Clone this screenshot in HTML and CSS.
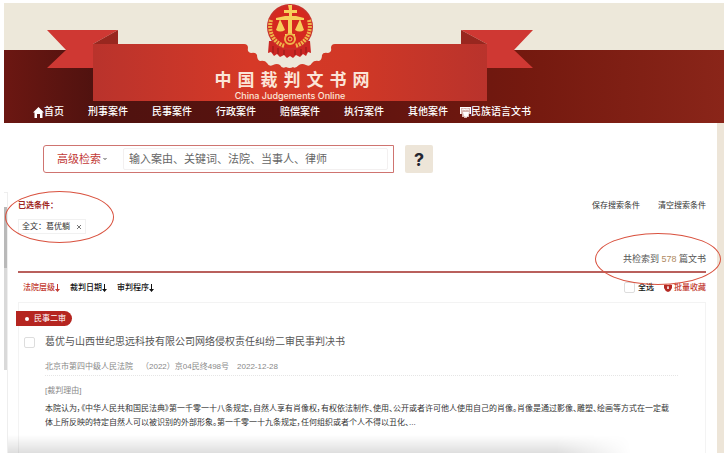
FILE: index.html
```html
<!DOCTYPE html>
<html lang="zh-CN">
<head>
<meta charset="UTF-8" />
<meta name="viewport" content="width=device-width, initial-scale=1" />
<title>中国裁判文书网</title>
<link rel="stylesheet" href="styles.css">
</head>
<body>
  <header class="header">
    <div class="brand">
      <svg class="ribbon" viewBox="47 3 486 98" aria-hidden="true">
        <defs>
          <linearGradient id="band" x1="0" x2="1">
            <stop offset="0" stop-color="#b9332c" />
            <stop offset=".4" stop-color="#d63927" />
            <stop offset=".65" stop-color="#d13826" />
            <stop offset="1" stop-color="#b9332c" />
          </linearGradient>
        </defs>
        <!-- tails and folds -->
        <path fill="#cf3833" d="M47 30h71L93 44v24H47l19-18z" />
        <path fill="#cf3833" d="M533 30h-72l26 14v24h46l-19-18z" />
        <path fill="#98271f" d="M118 30v14H93zM461 30v14h26z" />
        <!-- main band with the scalloped cut -->
        <path fill="#ede8da" d="M240 44h100v26H240z" />
        <path fill="url(#band)" d="M93 44H244q4 0 4 4q-1 4 3 5q5-1 6 2q0 5 3 6q5-1 7 2q2 4 6 2q4-2 7 0q2 4 6 2q4 2 7 0q2 2 6-2q3-2 7 0q4 2 6-2q2-3 7-2q3-1 3-6q1-3 6-2q4-1 3-5q0-4 4-4H487v57H93z" />
        <!-- emblem -->
        <path fill="#cb2623" d="M269 41l-1 12 3-1 3 4 3-2 3 3 4-2 3 3 3-2 3 2 3-3 4 2 3-3 3 2 2-4 3 1-1-12z" />
        <path stroke="#8f1a18" fill="none" d="M273 46v7m5-5v6m6-4v5m11-5v5m6-6v6m5-8v6" />
        <circle cx="290" cy="27" r="23" fill="#c9302a" />
        <circle cx="290" cy="27" r="21" fill="#d5281f" />
        <path fill="none" stroke="#efb54a" stroke-width="4" stroke-dasharray="2 1" d="M271 20C268 31 273 43 285 46M309 20C312 31 307 43 295 46" />
        <path fill="#f7cf5b" d="M288 5h4v5h5v3h-5v3h4l8 2v2h-12v14h3v2h-10v-2h3V20h-12v-2l9-2h4v-3h-5v-3h5z" />
        <path fill="#f7cf5b" d="M280 19l5 11q-5 3-9 0zM300 19l4 11q-4 3-9 0z" />
        <circle cx="290" cy="39" r="5" fill="#d5281f" stroke="#efb54a" stroke-width="2" />
        <circle cx="290" cy="39" r="2" fill="none" stroke="#f7cf5b" />
      </svg>
      <div class="brand-text">
        <h1>中国裁判文书网</h1>
        <p>China Judgements Online</p>
      </div>
    </div>
    <nav class="nav">
      <a href="#"><svg class="icon-home" viewBox="0 0 11 11" aria-hidden="true"><path fill="#fff" d="M5.500 0L11 5.500H9.500V11H7V7H4v4H1.500V5.500H0z" /></svg>首页</a>
      <a href="#">刑事案件</a>
      <a href="#">民事案件</a>
      <a href="#">行政案件</a>
      <a href="#">赔偿案件</a>
      <a href="#">执行案件</a>
      <a href="#">其他案件</a>
      <a href="#" class="nav-ethnic"><svg class="icon-home" viewBox="0 0 11 11" aria-hidden="true"><path fill="#d9b8b2" d="M0 0h11v7H9v3H7v1H4v-1H2V7H0z" /><path stroke="#fff" fill="none" d="M0 .5h11M.5 0v7M10.500 0v7M2 3l2-1 1 1 2-1 2 1" /><path fill="#fff" d="M3 5h6L8 9l-2 1-2-1z" /></svg>民族语言文书</a>
    </nav>
  </header>

  <main class="main">
    <form class="search">
      <div class="search-box">
        <select class="search-type" aria-label="检索类型">
          <option>高级检索</option>
        </select>
        <input class="search-input" type="text" placeholder="输入案由、关键词、法院、当事人、律师" aria-label="检索关键词" />
      </div>
      <button class="help" type="button">?</button>
    </form>

    <div class="results">
      <div class="side"></div>
      <section class="content">
        <div class="conditions">
          <div class="picked">
            <h2>已选条件：</h2>
            <div class="tag">全文：葛优躺<button type="button" aria-label="删除条件"><svg viewBox="0 0 6 6" aria-hidden="true"><path stroke="#777" d="M1 1l4 4M5 1L1 5" /></svg></button></div>
            <span class="mark mark-left"></span>
          </div>
          <div class="actions">
            <a href="#">保存搜索条件</a>
            <a href="#">清空搜索条件</a>
          </div>
        </div>

        <div class="count">
          <p>共检索到 <b>578</b> 篇文书</p>
          <span class="mark mark-right"></span>
        </div>

        <div class="toolbar">
          <div class="sort">
            <a href="#" class="active">法院层级<svg viewBox="0 0 5 8" aria-hidden="true"><path d="M2 0h1v5h2L2.500 8 0 5h2z" /></svg></a>
            <a href="#">裁判日期<svg viewBox="0 0 5 8" aria-hidden="true"><path d="M2 0h1v5h2L2.500 8 0 5h2z" /></svg></a>
            <a href="#">审判程序<svg viewBox="0 0 5 8" aria-hidden="true"><path d="M2 0h1v5h2L2.500 8 0 5h2z" /></svg></a>
          </div>
          <div class="batch">
            <label><input class="check" type="checkbox" />全选</label>
            <a href="#"><svg viewBox="0 0 8 8" aria-hidden="true"><path fill="#b52a24" d="M0 1q2-1 4 0 2-1 4 0v3q-1 3-4 4Q1 7 0 4z" /><path stroke="#fff" d="M4 2v3M3 4h2" /></svg>批量收藏</a>
          </div>
        </div>

        <article class="card">
          <span class="badge">民事二审</span>
          <div class="card-title">
            <input class="check" type="checkbox" id="doc1" />
            <h3><label for="doc1">葛优与山西世纪思远科技有限公司网络侵权责任纠纷二审民事判决书</label></h3>
          </div>
          <div class="card-body">
            <div class="meta">
              <span>北京市第四中级人民法院</span>
              <span>（2022）京04民终498号</span>
              <span>2022-12-28</span>
            </div>
            <h4>[裁判理由]</h4>
            <p>本院认为，《中华人民共和国民法典》第一千零一十八条规定，自然人享有肖像权，有权依法制作、使用、公开或者许可他人使用自己的肖像。肖像是通过影像、雕塑、绘画等方式在一定载体上所反映的特定自然人可以被识别的外部形象。第一千零一十九条规定，任何组织或者个人不得以丑化、...</p>
          </div>
        </article>
      </section>
    </div>
  </main>
</body>
</html>
```

FILE: styles.css
```css
* {
  box-sizing: border-box;
}
body {
  display: flex;
  flex-direction: column;
  min-height: 100vh;
  margin: 0;
  padding: 3px 0 1px 4px;
  background: #fff;
  color: #333;
  font-family: "Liberation Sans", "Noto Sans CJK SC", sans-serif;
  font-size: 8px;
  line-height: 12px;
}
h1, h2, h3, h4, p {
  margin: 0;
  font-size: inherit;
  font-weight: normal;
}
a {
  color: inherit;
  text-decoration: none;
}
button, input, select {
  font-family: inherit;
}

/* header */
.header {
  background:
    linear-gradient(#ede8da, #ede8da) top / 100% 47px no-repeat,
    linear-gradient(90deg, #6c1712, #4f120f 13%, #5c130f 45%, #74190f 72%, #8a2519);
}
.brand {
  display: grid;
  width: 486px;
  margin-left: 43px;
}
.ribbon, .brand-text {
  grid-area: 1 / 1;
}
.ribbon {
  display: block;
  width: 100%;
}
.brand-text {
  align-self: end;
  color: #fbe5d8;
  text-align: center;
}
.brand-text h1 {
  padding-left: 10px;
  font-size: 17px;
  font-weight: 700;
  line-height: 20px;
  letter-spacing: 6px;
}
.brand-text p {
  font-family: Inter, sans-serif;
  font-weight: 500;
  font-size: 9px;
  line-height: 10px;
}
.nav {
  display: flex;
  gap: 24px;
  padding-left: 29px;
  color: #fff;
  font-size: 10px;
  font-weight: 500;
  line-height: 22px;
}
.nav a {
  display: flex;
  align-items: center;
  white-space: nowrap;
}
.nav .nav-ethnic {
  margin-left: -12px;
}
.icon-home {
  width: 11px;
  height: 11px;
}

/* search */
.main {
  display: flex;
  flex-direction: column;
  flex: 1;
  border-right: 7px solid #ede5d8;
}
.search {
  display: flex;
  gap: 11px;
  padding: 22px 0 19px 39px;
}
.search-box {
  display: flex;
  width: 351px;
  height: 28px;
  padding: 2px 5px 2px 13px;
  border: 1px solid #cf7470;
  border-radius: 3px 0 0 3px;
}
.search-type {
  width: 66px;
  padding: 0;
  border: 0;
  appearance: none;
  background:
    linear-gradient(45deg, transparent 50%, #aaa 50%) 46px 10px / 2px 3px no-repeat,
    linear-gradient(315deg, transparent 50%, #aaa 50%) 48px 10px / 2px 3px no-repeat;
  color: #c23a36;
  font-size: 11px;
}
.search-input {
  flex: 1;
  min-width: 0;
  padding: 0 5px;
  border: 1px solid #f3f0f0;
  border-radius: 2px;
  font-size: 11px;
}
.search-input::placeholder {
  color: #666;
}
.help {
  width: 28px;
  height: 28px;
  padding: 0;
  border: 0;
  border-radius: 2px;
  background: #ede5d8;
  color: #252631;
  font-family: Inter, sans-serif;
  font-size: 18px;
  font-weight: 700;
}

/* results */
.results {
  display: flex;
  flex: 1;
}
.side {
  width: 4px;
  border-top: 1px solid #eee;
  border-right: 1px solid #eee;
  background:
    linear-gradient(#b9b9b9, #b9b9b9) 0 14px / 3px 61px no-repeat,
    linear-gradient(#d9d9d9, #d9d9d9) 0 14px / 3px 163px no-repeat;
}
.content {
  display: flex;
  flex-direction: column;
  flex: 1;
  padding: 8px 11px 0 10px;
}
.conditions {
  display: flex;
  justify-content: space-between;
}
.picked, .count {
  position: relative;
}
.picked h2 {
  color: #a02520;
  font-weight: 700;
}
.tag {
  display: flex;
  align-items: center;
  gap: 6px;
  height: 15px;
  margin-top: 7px;
  padding: 0 3px;
  border: 1px solid #f1f1f1;
}
.tag button {
  display: flex;
  padding: 0;
  border: 0;
  background: none;
}
.tag svg {
  width: 6px;
  height: 6px;
}
.actions {
  display: flex;
  gap: 18px;
}
.count {
  margin-top: 19px;
  padding-bottom: 6px;
  border-bottom: 2px solid #b9605c;
  color: #555;
  font-size: 9px;
  text-align: right;
}
.count b {
  color: #b08a5f;
  font-weight: normal;
}
.mark {
  position: absolute;
  border: 1px solid #d9523f;
  border-radius: 50%;
  pointer-events: none;
}
.mark-left {
  top: -9px;
  left: -13px;
  width: 109px;
  height: 52px;
}
.mark-right {
  top: -20px;
  right: -15px;
  width: 126px;
  height: 52px;
}
.toolbar {
  display: flex;
  align-items: center;
  justify-content: space-between;
  height: 29px;
  padding-left: 5px;
  color: #111;
  font-weight: 500;
}
.sort, .batch {
  display: flex;
  gap: 10px;
}
.sort a, .batch a, .batch label {
  display: flex;
  align-items: center;
}
.sort svg {
  width: 5px;
  height: 8px;
  fill: currentColor;
}
.sort .active, .batch a {
  color: #c23a30;
}
.batch label {
  gap: 3px;
}
.batch a svg {
  width: 8px;
  height: 8px;
  margin-right: 2px;
}
.check {
  width: 11px;
  height: 11px;
  margin: 0;
  border: 1px solid #ddd;
  border-radius: 2px;
  appearance: none;
  background: #fff;
}

/* document card */
.card {
  flex: 1;
  padding-top: 8px;
  border: 1px solid #f3f3f3;
  border-bottom: 0;
}
.badge {
  display: flex;
  align-items: center;
  gap: 5px;
  width: 56px;
  height: 15px;
  margin-left: -3px;
  padding-left: 9px;
  border-radius: 0 8px 8px 0;
  background: #b52520;
  color: #fff;
}
.badge::before {
  content: "";
  width: 4px;
  height: 4px;
  border-radius: 50%;
  background: #fff;
}
.card-title {
  display: flex;
  align-items: center;
  gap: 10px;
  margin-top: 8px;
  padding-left: 5px;
  color: #555;
  font-size: 10px;
  line-height: 16px;
}
.card-body {
  padding: 11px 27px 0 26px;
}
.meta {
  display: flex;
  gap: 8px;
  padding-bottom: 2px;
  border-bottom: 1px dotted #e5e5e5;
  color: #888;
}
.card-body h4 {
  margin: 9px 0 5px;
  color: #888;
}
.card-body p {
  padding-right: 5px;
  font-feature-settings: "palt";
  line-height: 14px;
}

/* shade along the bottom edge */
body::after {
  content: "";
  position: fixed;
  bottom: 1px;
  left: 8px;
  width: 86%;
  height: 18px;
  background: linear-gradient(transparent, rgba(0, 0, 0, 0.13));
  -webkit-mask-image: linear-gradient(90deg, #000 88%, transparent);
  mask-image: linear-gradient(90deg, #000 88%, transparent);
  pointer-events: none;
}
```
